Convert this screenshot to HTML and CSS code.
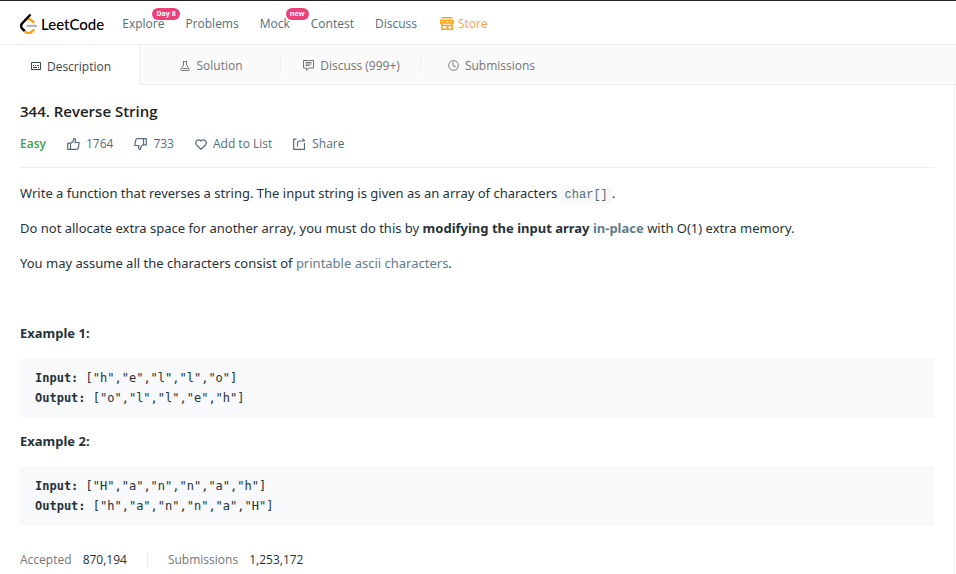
FILE: index.html
```html
<!DOCTYPE html>
<html lang="en">
<head>
    <meta charset="UTF-8">
    <meta name="viewport" content="width=device-width, initial-scale=1.0">
    <title>Reverse String - LeetCode</title>

    <link rel="stylesheet" href="styles.css">
</head>
<body>

    <header class="header">
        <a class="logo" href="#">
            <svg width="18" height="20" viewBox="2 0 21 24" fill="none" stroke-width="2.9" stroke-linecap="round">
                <path d="M8 7.4c1.6-1.7 4.7-1.8 6.5-.5l3.500 2.800M4.300 17.500l4.500 4.300c1.900 1.500 4.800 1.400 6.500-.2l2.700-2.500" stroke="#ffa116"/>
                <path d="M10.700 14.200h10.200" stroke="#b3b3b3"/>
                <path d="M13.500 1.500L4.200 11.400c-1.500 1.900-1.400 4.500.2 6.200l2 1.900" stroke="#000"/>
            </svg>
            <span>LeetCode</span>
        </a>
        <nav class="nav">
            <a href="#">Explore<span class="badge badge-day">Day 8</span></a>
            <a href="#">Problems</a>
            <a href="#">Mock<span class="badge">new</span></a>
            <a href="#">Contest</a>
            <a href="#">Discuss</a>
            <a class="store" href="#">
                <svg width="14" height="13" viewBox="0 0 14 13" fill="none" stroke="#ffa116" stroke-width="1.5">
                    <path d="M1.500 .8h11M.8 3.500h12.400v2.500H.8zM1.800 6v6.200h10.400V6M2 8.500h10M7.500 8.500v3.500M4.800 3.500v2.500M9.200 3.500v2.500"/>
                </svg>
                Store
            </a>
        </nav>
    </header>

    <div class="tabs">
        <button class="tab active">
            <svg width="10" height="8" viewBox="0 0 10 8" fill="none" stroke="currentColor">
                <path d="M.5.5h9v7h-9zM2 3.500h1M4 3.500h1M6 3.500h2M2 5.500h4M7 5.500h1"/>
            </svg>
            Description
        </button>
        <button class="tab">
            <svg width="10" height="10" viewBox="0 0 10 10" fill="none" stroke="currentColor">
                <path d="M3 .5h4M3.500 1v3L.8 8.400q-.3 1.100.7 1.100h7q1 0 .7-1.100L6.500 4V1M2.500 7.500h5"/>
            </svg>
            Solution
        </button>
        <button class="tab">
            <svg width="11" height="11" viewBox="0 0 11 11" fill="none" stroke="currentColor">
                <path d="M.5.5h10v7.500H6L3.500 10.300V8h-3zM2.500 2.500h6M2.500 4h6M2.500 5.500h4"/>
            </svg>
            Discuss (999+)
        </button>
        <button class="tab">
            <svg width="11" height="11" viewBox="0 0 11 11" fill="none" stroke="currentColor">
                <circle cx="5.500" cy="5.500" r="4.800"/>
                <path d="M5 2.500v3.300l2.800 1.200"/>
            </svg>
            Submissions
        </button>
    </div>

    <main class="content">
        <h1>344. Reverse String</h1>

        <div class="actions">
            <span class="easy">Easy</span>
            <button class="like">
                <svg width="13" height="12" viewBox="0 0 13 12" fill="none" stroke="currentColor" stroke-width="1.2" stroke-linejoin="round">
                    <path d="M3.500 11.300H.7V5.200h2.800zM3.500 5.500L6 3.500 6.700.7c1.400-.2 2 .6 1.800 1.700L8 4.500h4.200l-.8 5.300-1.400 1.500H3.500"/>
                </svg>
                1764
            </button>
            <button class="dislike">
                <svg width="13" height="12" viewBox="0 0 13 12" fill="none" stroke="currentColor" stroke-width="1.2" stroke-linejoin="round">
                    <path d="M9.500.7h2.800v6.100H9.500zM9.500 6.500L7 8.500l-.7 2.800c-1.400.2-2-.6-1.800-1.700L5 7.500H.8l.8-5.300L3 .7h6.500"/>
                </svg>
                733
            </button>
            <button class="add">
                <svg width="12" height="11" viewBox="0 0 12 11" fill="none" stroke="currentColor" stroke-width="1.2" stroke-linejoin="round">
                    <path d="M6 10.300L1.300 5.700C-.6 3 2.600-.9 6 2c3.400-2.900 6.600 1 4.700 3.700z"/>
                </svg>
                Add to List
            </button>
            <button class="share">
                <svg width="13" height="12" viewBox="0 0 13 12" fill="none" stroke="currentColor" stroke-width="1.2">
                    <path d="M3.500 1.200H.7v10.100h10.800V5M4.500 8.500V5q0-2 2-2h5M9.500 .8L11.800 3"/>
                </svg>
                Share
            </button>
        </div>

        <div class="question">
            <p>Write a function that reverses a string. The input string is given as an array of characters <code>char[]</code>.</p>
            <p>Do not allocate extra space for another array, you must do this by <strong>modifying the input array <a href="#">in-place</a></strong> with O(1) extra memory.</p>
            <p>You may assume all the characters consist of <a href="#">printable ascii characters</a>.</p>
            <p>&nbsp;</p>
            <p><strong>Example 1:</strong></p>
<pre><strong>Input: </strong>["h","e","l","l","o"]
<strong>Output: </strong>["o","l","l","e","h"]</pre>
            <p><strong>Example 2:</strong></p>
<pre><strong>Input: </strong>["H","a","n","n","a","h"]
<strong>Output: </strong>["h","a","n","n","a","H"]</pre>
        </div>

        <div class="stats">
            <div>Accepted <span>870,194</span></div>
            <div>Submissions <span>1,253,172</span></div>
        </div>
    </main>

</body>
</html>
```
FILE: styles.css
```css
* {
    box-sizing: border-box;
}

body {
    display: flex;
    flex-direction: column;
    min-height: 100vh;
    margin: 0;
    border-top: 1px solid #222;
    background-color: #fff;
    color: #263238;
    font-family: "Open Sans", "Noto Sans", sans-serif;
    font-size: 12px;
}

a {
    color: #607d8b;
    text-decoration: none;
}

button {
    padding: 0;
    border: none;
    background: none;
    color: #546e7a;
    font: inherit;
    cursor: pointer;
}

.header {
    display: flex;
    align-items: center;
    height: 44px;
    padding: 2px 0 0 20px;
    border-bottom: 1px solid #eee;
}

.logo {
    display: flex;
    align-items: center;
    gap: 3px;
    margin-right: 18px;
    color: #000;
    font-family: Lato, sans-serif;
    font-size: 15px;
    font-weight: 500;
}

.nav {
    display: flex;
    align-items: center;
    gap: 21px;
    font-size: 12px;
}

.nav a {
    position: relative;
    color: #546e7a;
}

.nav .store {
    display: flex;
    align-items: center;
    gap: 4px;
    margin-left: 2px;
    color: #ffa13d;
}

.badge {
    position: absolute;
    top: -7px;
    left: calc(100% - 4px);
    padding: 0 4px;
    border-radius: 6px;
    background-color: #ec407a;
    color: #fff;
    font-size: 7px;
    font-weight: 700;
    line-height: 12px;
    white-space: nowrap;
}

.badge-day {
    left: calc(100% - 12px);
}

.tabs {
    display: flex;
    height: 40px;
    border-bottom: 1px solid #eee;
    background-color: #fafafa;
}

.tab {
    display: flex;
    align-items: center;
    justify-content: center;
    gap: 6px;
    width: 140px;
    padding: 2px 0 0 3px;
    color: #757575;
}

.tab + .tab + .tab {
    background: linear-gradient(#eee, #eee) left center / 1px 16px no-repeat;
}

.tab.active {
    height: 40px;
    border-right: 1px solid #eee;
    background: #fff;
    color: #37474f;
}

.content {
    flex: 1;
    margin-right: 1px;
    padding: 15px 20px 0;
    border-right: 1px solid #eee;
}

h1 {
    margin: 0;
    color: #212121;
    font-size: 15px;
    font-weight: 600;
    line-height: 22px;
}

.actions {
    display: flex;
    align-items: center;
    gap: 21px;
    margin-top: 9px;
    padding: 4px 0 14px;
    border-bottom: 1px solid #eee;
    line-height: 18px;
}

.actions button {
    display: flex;
    align-items: center;
    gap: 6px;
}

.easy {
    color: #43a047;
    font-weight: 600;
}

.question {
    padding-top: 15px;
    font-family: "Noto Sans", sans-serif;
    font-size: 13px;
    line-height: 21px;
}

.question p {
    margin: 0 0 14px;
}

.question strong {
    font-weight: 700;
}

code {
    padding: 2px 4px;
    border-radius: 3px;
    background-color: #f7f9fa;
    color: #546e7a;
    font-family: "Liberation Mono", monospace;
    font-size: 12px;
    line-height: 12px;
}

.question pre {
    margin: 0 0 13px;
    padding: 10px 15px;
    border-radius: 3px;
    background-color: #f7f9fa;
    color: #263238;
    font-family: "DejaVu Sans Mono", monospace;
    font-size: 12px;
    line-height: 20px;
}

.stats {
    display: flex;
    margin-top: 26px;
    color: #757575;
    line-height: 16px;
}

.stats div + div {
    margin-left: 20px;
    padding-left: 20px;
    border-left: 1px solid #eee;
}

.stats span {
    margin-left: 8px;
    color: #263238;
}
```
